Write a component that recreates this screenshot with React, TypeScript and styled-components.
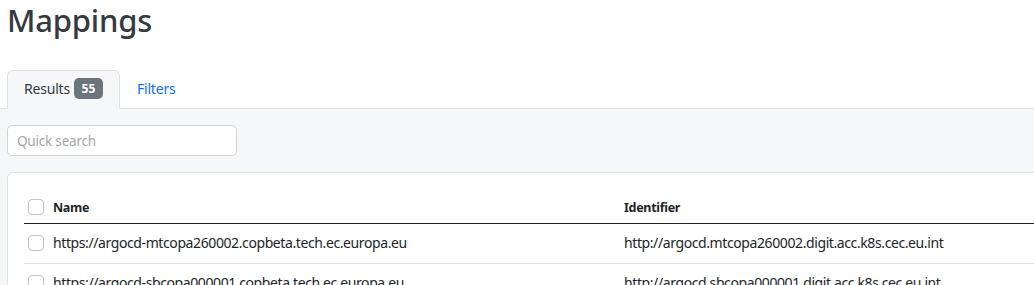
import React from "react";
import styled, { createGlobalStyle } from "styled-components";

const Global = createGlobalStyle`
  html, body { margin: 0; padding: 0; background: #fff; overflow: hidden; }
  body { font-family: "Noto Sans", "Open Sans", sans-serif; color: #212529; }
  * { box-sizing: border-box; }
`;

const Page = styled.div`
  width: 1034px;
  display: flex;
  flex-direction: column;
`;

const Title = styled.h1`
  margin: 0;
  padding: 0 0 0 7px;
  height: 70px;
  font-size: 31px;
  line-height: 40px;
  font-weight: 500;
  letter-spacing: -0.2px;
  color: #343a40;
`;

const TabBar = styled.div`
  display: flex;
  padding-left: 7px;
  border-bottom: 1px solid #dee2e6;
  height: 39px;
`;

const Tab = styled.div<{ $active?: boolean }>`
  display: flex;
  align-items: center;
  gap: 4px;
  height: 39px;
  padding: 0 16px 2px 16px;
  font-size: 14px;
  letter-spacing: -0.2px;
  color: ${(p) => (p.$active ? "#343a40" : "#0d6efd")};
  background: ${(p) => (p.$active ? "#f6f7f9" : "transparent")};
  border: 1px solid ${(p) => (p.$active ? "#dee2e6" : "transparent")};
  border-bottom-color: ${(p) => (p.$active ? "#f6f7f9" : "transparent")};
  border-radius: 6px 6px 0 0;
  margin-bottom: -1px;
`;

const Badge = styled.span`
  display: inline-flex;
  align-items: center;
  justify-content: center;
  width: 29px;
  height: 21px;
  border-radius: 5px;
  background: #6c757d;
  color: #fff;
  font-size: 12px;
  font-weight: 700;
  letter-spacing: 0;
`;

const Panel = styled.div`
  background: #f6f7f9;
  padding: 16px 0 0 7px;
  display: flex;
  flex-direction: column;
  gap: 16px;
`;

const Search = styled.input`
  width: 230px;
  height: 31px;
  border: 1px solid #ced4da;
  border-radius: 5px;
  padding: 0 9px;
  font-family: inherit;
  font-size: 13.5px;
  letter-spacing: -0.2px;
  background: #fff;
  outline: none;
  &::placeholder { color: #a3a8ae; }
`;

const Card = styled.div`
  width: 1200px;
  background: #fff;
  border: 1px solid #dee2e6;
  border-radius: 6px 0 0 0;
  padding: 12px 16px 0 16px;
`;

const Table = styled.table`
  width: 1100px;
  border-collapse: collapse;
`;

const Th = styled.th<{ $w?: number }>`
  text-align: left;
  font-size: 12.5px;
  font-weight: 700;
  letter-spacing: -0.3px;
  height: 38px;
  padding: 0 4px 7px 4px;
  vertical-align: bottom;
  border-bottom: 1px solid #212529;
  width: ${(p) => (p.$w ? `${p.$w}px` : "auto")};
`;

const Td = styled.td`
  font-size: 14px;
  letter-spacing: -0.4px;
  height: 40px;
  padding: 0 4px 2px 4px;
  border-bottom: 1px solid #dee2e6;
  vertical-align: middle;
`;

const CheckCell = styled.div`
  display: flex;
  align-items: center;
  gap: 9px;
`;

const Check = styled.span<{ $head?: boolean }>`
  display: inline-block;
  width: 16px;
  height: 16px;
  margin-top: ${(p) => (p.$head ? "0" : "2px")};
  border: 1px solid #bfc4c9;
  border-radius: 4px;
  background: #fff;
  flex: none;
`;

const rows = [
  ["https://argocd-mtcopa260002.copbeta.tech.ec.europa.eu", "http://argocd.mtcopa260002.digit.acc.k8s.cec.eu.int"],
  ["https://argocd-sbcopa000001.copbeta.tech.ec.europa.eu", "http://argocd.sbcopa000001.digit.acc.k8s.cec.eu.int"],
];

export default function App() {
  return (
    <Page>
      <Global />
      <Title>Mappings</Title>
      <TabBar>
        <Tab $active>
          Results <Badge>55</Badge>
        </Tab>
        <Tab>Filters</Tab>
      </TabBar>
      <Panel>
        <Search placeholder="Quick search" />
        <Card>
          <Table>
            <thead>
              <tr>
                <Th $w={596}>
                  <CheckCell>
                    <Check $head />
                    Name
                  </CheckCell>
                </Th>
                <Th>Identifier</Th>
              </tr>
            </thead>
            <tbody>
              {rows.map((r) => (
                <tr key={r[0]}>
                  <Td>
                    <CheckCell>
                      <Check />
                      {r[0]}
                    </CheckCell>
                  </Td>
                  <Td>{r[1]}</Td>
                </tr>
              ))}
            </tbody>
          </Table>
        </Card>
      </Panel>
    </Page>
  );
}
